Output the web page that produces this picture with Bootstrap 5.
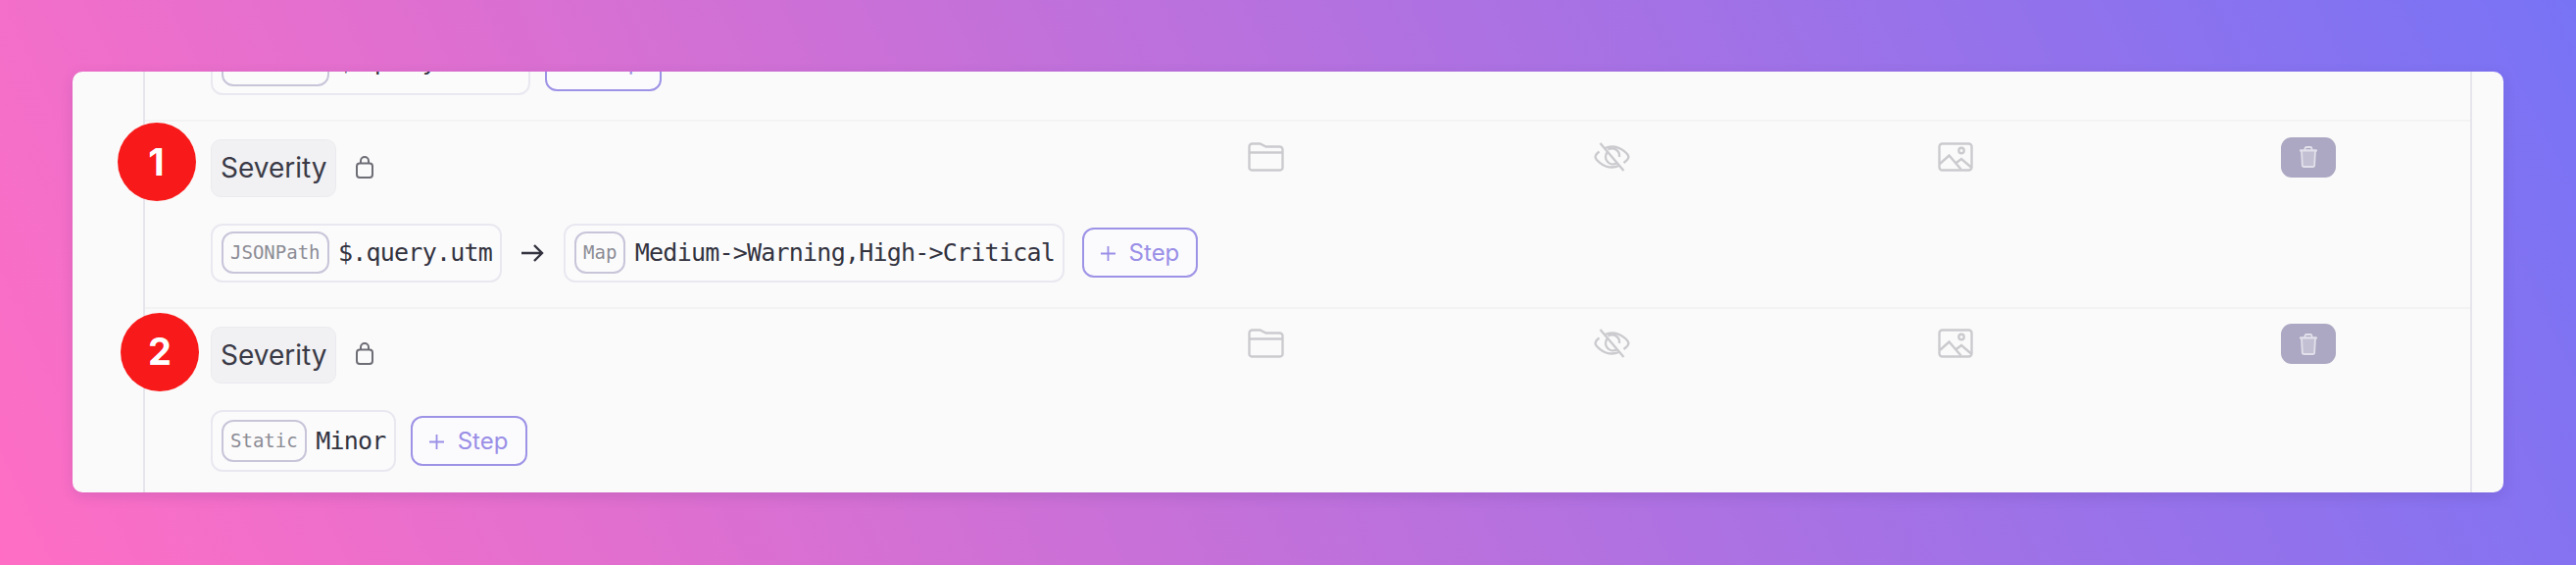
<!DOCTYPE html>
<html lang="en">
  <head>
    <meta charset="UTF-8" />
    <meta name="viewport" content="width=device-width, initial-scale=1.0" />
    <title>Alert Rule Mapping</title>
    <link
      href="https://cdn.jsdelivr.net/npm/bootstrap@5.3.0/dist/css/bootstrap.min.css"
      rel="stylesheet"
    />
    <style>
      body {
        height: 576px;
        padding: 73px 74px 0;
        overflow: hidden;
        background: linear-gradient(65deg, #ff6ec4, #7873f5);
        font-family: "Inter", "Liberation Sans", sans-serif;
      }
      .ruleCard {
        height: 429px;
        overflow: hidden;
        justify-content: flex-end;
        background: #fafafa;
        border: 0;
        border-radius: 10px;
        box-shadow: 0 4px 14px rgba(60, 40, 110, 0.14);
      }
      .ruleTable {
        margin: 0 32px 0 72px;
        border-left: 2px solid #e6e5ec;
        border-right: 2px solid #e6e5ec;
      }
      .ruleRow {
        padding: 15.5px 0 25px 67px;
        border-top: 2px solid #f3f3f4;
      }
      .ruleRow.clippedRow {
        border-top: 0;
        padding-top: 0;
      }
      .ruleRow.lastRow {
        padding-bottom: 21px;
      }
      .ruleHead {
        display: grid;
        grid-template-columns: 1fr 353px 351px 350px 193px;
        margin-bottom: 27px;
      }
      .nameChip {
        height: 58.5px;
        margin-top: 2.5px;
        padding: 0 9px;
        font-size: 28px;
        color: #3a3a46;
        background: #f1f1f4;
        border: 1px solid #ebebef;
        border-radius: 10px;
      }
      .lockIcon {
        margin: 0 0 0 20px;
      }
      .rowIcon {
        margin-top: 5px;
      }
      .trashBtn {
        width: 56px;
        height: 41px;
        padding: 0;
        background: #aca7c2;
        border: 0;
        border-radius: 11px;
      }
      .stepPipe {
        height: 60px;
        padding: 0 8px 0 9px;
        background: #fbfbfc;
        border: 2px solid #e9e8f0;
        border-radius: 12px;
        font-family: "DejaVu Sans Mono", "Liberation Mono", monospace;
        font-size: 25px;
        letter-spacing: -0.78px;
        color: #33333f;
      }
      .stepPipe.tallPipe {
        height: 63px;
      }
      .stepTag {
        height: 42.5px;
        padding: 0 7px;
        margin-right: 9.5px;
        font-size: 19px;
        letter-spacing: 0;
        color: #8c8c94;
        border: 2px solid #c8c5d9;
        border-radius: 12px;
      }
      .addStep {
        height: 51px;
        width: 118px;
        padding: 0;
        margin-left: 18px;
        font-size: 24px;
        color: #9a8fe6;
        background: #fbfbfe;
        border: 2px solid #9d93e6;
        border-radius: 12px;
      }
      .addStep svg {
        margin-right: 14px;
      }
      .lastRow .addStep,
      .clippedRow .addStep {
        width: 119px;
        margin-left: 15px;
      }
      .flowArrow {
        margin: 0 20px;
      }
      /* the row above is cut by the card edge, only its lowest strokes show */
      .clippedRow .stepTag,
      .clippedRow .pipeValue,
      .clippedRow .addStep {
        padding-bottom: 8px;
      }
      .numberMark {
        width: 80px;
        height: 80px;
        font-size: 38px;
        font-weight: 700;
        background: #f81a1a;
        z-index: 2;
      }
      .markOne {
        left: -28.5px;
        top: 1px;
      }
      .markTwo {
        left: -25px;
        top: 4px;
      }
    </style>
  </head>
  <body>
    <div class="card ruleCard">
      <div class="ruleTable">
        <div class="ruleRow clippedRow">
          <div class="d-flex align-items-center">
            <div class="stepPipe d-flex align-items-center">
              <span class="stepTag d-flex align-items-center">JSONPath</span>
              <span class="pipeValue">$.query.alert</span>
            </div>
            <button class="btn addStep" type="button">
              <svg width="15" height="15" viewBox="0 0 15 15" fill="none" stroke="#9a8fe6" stroke-width="1.800"><path d="M7.500 0v15M0 7.500h15" /></svg>Step
            </button>
          </div>
        </div>

        <div class="ruleRow position-relative">
          <div class="numberMark markOne position-absolute rounded-circle text-white d-flex align-items-center justify-content-center">1</div>
          <div class="ruleHead">
            <div class="d-flex align-items-center">
              <span class="nameChip d-flex align-items-center">Severity</span>
              <svg class="lockIcon" width="18" height="23" viewBox="0 0 18 23" fill="none" stroke="#6d6d76" stroke-width="2"><rect x="1" y="7.500" width="16" height="14.500" rx="3" /><path d="M5 7.500V5a4 4 0 0 1 8 0v2.500" /></svg>
            </div>
            <div><svg class="rowIcon" width="37" height="30" viewBox="0 0 37 30" fill="none" stroke="#cbcbcf" stroke-width="2.400"><path d="M1.500 26V4.500a3 3 0 0 1 3-3h8l6 3h14a3 3 0 0 1 3 3V26a2.500 2.500 0 0 1-2.500 2.500H4A2.500 2.500 0 0 1 1.500 26Z" /><path d="M1.500 10.500h34" /></svg></div>
            <div><svg class="rowIcon" width="37" height="30" viewBox="0 0 37 30" fill="none" stroke="#cbcbcf" stroke-width="2.400"><path d="M5.500 9.500C2.800 11.600 1.600 14 1.600 15c0 2.200 7 10.500 16.900 10.500 2.600 0 4.900-.6 7-1.500M11.500 6c2-.9 4.400-1.500 7-1.500 9.900 0 16.900 8.300 16.900 10.500 0 1.100-1.700 3.700-4.900 6" /><path d="M13.500 10.500a7.500 7.500 0 0 0 10 10.800M14.500 7.600a7.500 7.500 0 0 1 11.500 7.400" /><path d="M6.500 1l24 28" /></svg></div>
            <div><svg class="rowIcon" width="36" height="30" viewBox="0 0 36 30" fill="none" stroke="#cbcbcf" stroke-width="2.400"><rect x="1.500" y="1.500" width="33" height="27" rx="3" /><circle cx="24" cy="8.500" r="2.700" /><path d="M2 22l9.500-8.500 12 14M18 21.500l6-4.500 10.500 9" /></svg></div>
            <div>
              <button class="btn trashBtn d-flex align-items-center justify-content-center" type="button" aria-label="Delete">
                <svg width="20" height="22" viewBox="0 0 20 22" fill="none" stroke="#e2e0ea" stroke-width="1.800"><path d="M1 4.500h18M6.500 4.500V2.500a1.500 1.500 0 0 1 1.500-1.500h4a1.500 1.500 0 0 1 1.500 1.500v2" /><path fill="#c3c0d4" d="M3 4.500l.8 15a1.500 1.500 0 0 0 1.500 1.500h9.400a1.500 1.500 0 0 0 1.500-1.500l.8-15Z" /></svg>
              </button>
            </div>
          </div>
          <div class="d-flex align-items-center">
            <div class="stepPipe d-flex align-items-center">
              <span class="stepTag d-flex align-items-center">JSONPath</span>
              <span class="pipeValue">$.query.utm</span>
            </div>
            <svg class="flowArrow" width="23" height="20" viewBox="0 0 23 20" fill="none" stroke="#33333f" stroke-width="2.400"><path d="M0 10h21M13 2l8 8-8 8" /></svg>
            <div class="stepPipe d-flex align-items-center">
              <span class="stepTag d-flex align-items-center">Map</span>
              <span class="pipeValue">Medium-&gt;Warning,High-&gt;Critical</span>
            </div>
            <button class="btn addStep" type="button">
              <svg width="15" height="15" viewBox="0 0 15 15" fill="none" stroke="#9a8fe6" stroke-width="1.800"><path d="M7.500 0v15M0 7.500h15" /></svg>Step
            </button>
          </div>
        </div>

        <div class="ruleRow lastRow position-relative">
          <div class="numberMark markTwo position-absolute rounded-circle text-white d-flex align-items-center justify-content-center">2</div>
          <div class="ruleHead">
            <div class="d-flex align-items-center">
              <span class="nameChip d-flex align-items-center">Severity</span>
              <svg class="lockIcon" width="18" height="23" viewBox="0 0 18 23" fill="none" stroke="#6d6d76" stroke-width="2"><rect x="1" y="7.500" width="16" height="14.500" rx="3" /><path d="M5 7.500V5a4 4 0 0 1 8 0v2.500" /></svg>
            </div>
            <div><svg class="rowIcon" width="37" height="30" viewBox="0 0 37 30" fill="none" stroke="#cbcbcf" stroke-width="2.400"><path d="M1.500 26V4.500a3 3 0 0 1 3-3h8l6 3h14a3 3 0 0 1 3 3V26a2.500 2.500 0 0 1-2.500 2.500H4A2.500 2.500 0 0 1 1.500 26Z" /><path d="M1.500 10.500h34" /></svg></div>
            <div><svg class="rowIcon" width="37" height="30" viewBox="0 0 37 30" fill="none" stroke="#cbcbcf" stroke-width="2.400"><path d="M5.500 9.500C2.800 11.600 1.600 14 1.600 15c0 2.200 7 10.500 16.900 10.500 2.600 0 4.900-.6 7-1.500M11.500 6c2-.9 4.400-1.500 7-1.500 9.900 0 16.900 8.300 16.900 10.500 0 1.100-1.700 3.700-4.900 6" /><path d="M13.500 10.500a7.500 7.500 0 0 0 10 10.800M14.500 7.600a7.500 7.500 0 0 1 11.500 7.400" /><path d="M6.500 1l24 28" /></svg></div>
            <div><svg class="rowIcon" width="36" height="30" viewBox="0 0 36 30" fill="none" stroke="#cbcbcf" stroke-width="2.400"><rect x="1.500" y="1.500" width="33" height="27" rx="3" /><circle cx="24" cy="8.500" r="2.700" /><path d="M2 22l9.500-8.500 12 14M18 21.500l6-4.500 10.500 9" /></svg></div>
            <div>
              <button class="btn trashBtn d-flex align-items-center justify-content-center" type="button" aria-label="Delete">
                <svg width="20" height="22" viewBox="0 0 20 22" fill="none" stroke="#e2e0ea" stroke-width="1.800"><path d="M1 4.500h18M6.500 4.500V2.500a1.500 1.500 0 0 1 1.500-1.500h4a1.500 1.500 0 0 1 1.500 1.500v2" /><path fill="#c3c0d4" d="M3 4.500l.8 15a1.500 1.500 0 0 0 1.500 1.500h9.400a1.500 1.500 0 0 0 1.500-1.500l.8-15Z" /></svg>
              </button>
            </div>
          </div>
          <div class="d-flex align-items-center">
            <div class="stepPipe tallPipe d-flex align-items-center">
              <span class="stepTag d-flex align-items-center">Static</span>
              <span class="pipeValue">Minor</span>
            </div>
            <button class="btn addStep" type="button">
              <svg width="15" height="15" viewBox="0 0 15 15" fill="none" stroke="#9a8fe6" stroke-width="1.800"><path d="M7.500 0v15M0 7.500h15" /></svg>Step
            </button>
          </div>
        </div>
      </div>
    </div>

    <script src="https://cdn.jsdelivr.net/npm/bootstrap@5.3.0/dist/js/bootstrap.bundle.min.js"></script>
  </body>
</html>
